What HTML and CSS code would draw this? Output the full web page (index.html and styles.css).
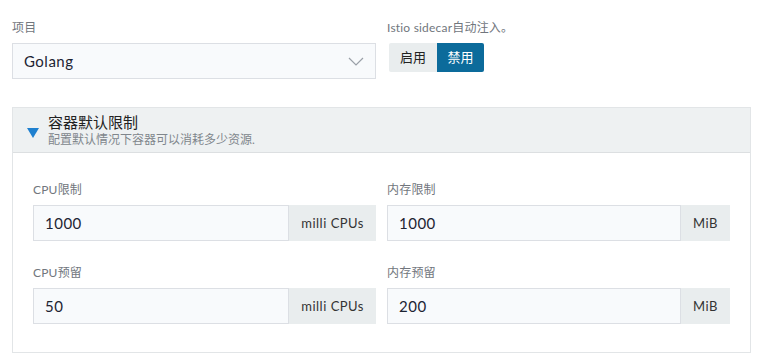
FILE: index.html
```html
<!DOCTYPE html>
<html lang="zh">
<head>
	<meta charset="UTF-8">
	<title>项目设置</title>
	<link rel="stylesheet" href="styles.css">
</head>
<body>
	<!-- 项目与 sidecar -->
	<div class="top_row">
		<div class="field">
			<div class="label">项目</div>
			<div class="select">
				<span>Golang</span>
				<svg class="chevron" width="16" height="9" viewBox="0 0 16 9"><path d="M1 1 L8 8 L15 1" fill="none" stroke="#9aa0a8" stroke-width="1.2"/></svg>
			</div>
		</div>
		<div class="field">
			<div class="label">Istio sidecar自动注入。</div>
			<div class="btn_group">
				<div class="btn">启用</div>
				<div class="btn active">禁用</div>
			</div>
		</div>
	</div>

	<!-- 容器默认限制 -->
	<div class="panel">
		<div class="panel_head">
			<span class="arrow"></span>
			<div>
				<div class="title">容器默认限制</div>
				<div class="sub">配置默认情况下容器可以消耗多少资源.</div>
			</div>
		</div>
		<div class="panel_body">
			<div class="field">
				<div class="label">CPU限制</div>
				<div class="input_group"><div class="input">1000</div><div class="addon">milli CPUs</div></div>
			</div>
			<div class="field">
				<div class="label">内存限制</div>
				<div class="input_group"><div class="input">1000</div><div class="addon">MiB</div></div>
			</div>
			<div class="field">
				<div class="label">CPU预留</div>
				<div class="input_group"><div class="input">50</div><div class="addon">milli CPUs</div></div>
			</div>
			<div class="field">
				<div class="label">内存预留</div>
				<div class="input_group"><div class="input">200</div><div class="addon">MiB</div></div>
			</div>
		</div>
	</div>
</body>
</html>
```

FILE: styles.css
```css
* {
	margin: 0;
	padding: 0;
	box-sizing: border-box;
}

body {
	width: 765px;
	padding: 19px 14px 0 12px;
	font-family: Lato, "Noto Sans CJK SC", sans-serif;
	color: #1d2433;
	background: #fff;
}

.top_row {
	display: grid;
	grid-template-columns: 364px 1fr;
	column-gap: 11px;
}

.label {
	font-size: 12px;
	line-height: 18px;
	color: #71767d;
	margin-bottom: 6px;
	letter-spacing: 0.2px;
}

.select {
	height: 36px;
	border: 1px solid #dcdfe4;
	background: #f8fafc;
	display: flex;
	align-items: center;
	justify-content: space-between;
	padding: 0 11px 0 11px;
	font-size: 15px;
	letter-spacing: 0.5px;
}

.btn_group {
	display: flex;
	margin: 5px 0 0 2px;
}

.btn {
	width: 48px;
	height: 29px;
	line-height: 29px;
	text-align: center;
	font-size: 13px;
	background: #e9edee;
	color: #222;
	border-radius: 2px 0 0 2px;
}

.btn.active {
	width: 47px;
	background: #0c6b9b;
	color: #fff;
	border-radius: 0 2px 2px 0;
}

.panel {
	margin-top: 28px;
	width: 739px;
	border: 1px solid #e2e5e7;
}

.panel_head {
	height: 45px;
	background: #eef1f2;
	border-bottom: 1px solid #dcdfe1;
	display: flex;
	align-items: center;
	padding: 0 0 0 14px;
}

.arrow {
	width: 0;
	height: 0;
	border-left: 6px solid transparent;
	border-right: 6px solid transparent;
	border-top: 10px solid #1f80cf;
	margin: 6px 9px 0 0;
}

.title {
	font-size: 15px;
	line-height: 19px;
	color: #222;
}

.sub {
	font-size: 12px;
	line-height: 16px;
	color: #80868c;
}

.panel_body {
	display: grid;
	grid-template-columns: 343px 343px;
	column-gap: 11px;
	row-gap: 23px;
	padding: 28px 20px 28px 20px;
}

.input_group {
	display: flex;
	height: 36px;
}

.input {
	flex: 1;
	border: 1px solid #dcdfe4;
	background: #f8fafc;
	font-size: 15px;
	line-height: 34px;
	padding-left: 11px;
	letter-spacing: 0.5px;
}

.addon {
	background: #e9edee;
	font-size: 13px;
	line-height: 36px;
	padding: 0 12px;
	color: #333;
	letter-spacing: 0.5px;
}
```
